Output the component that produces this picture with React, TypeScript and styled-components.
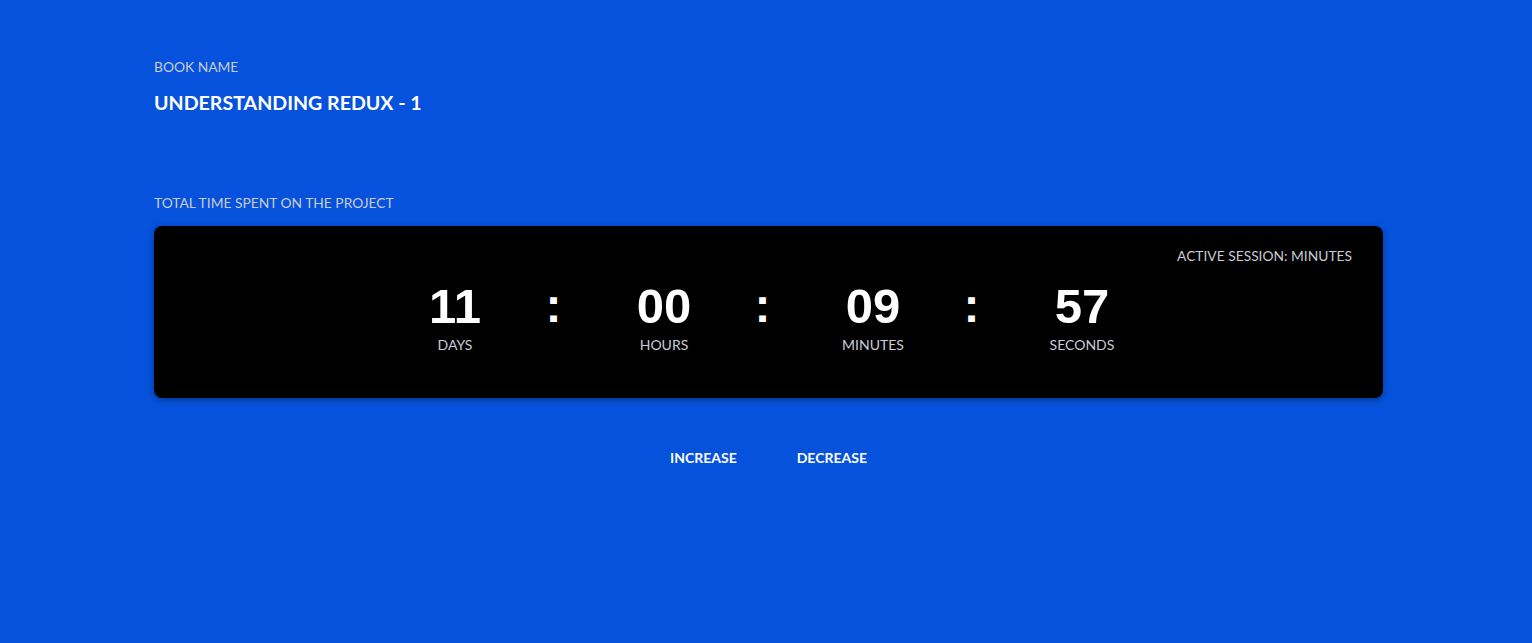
import React from "react";
import styled, { createGlobalStyle } from "styled-components";

const Global = createGlobalStyle`
  html, body { margin: 0; padding: 0; background: #0652dd; }
  body { font-family: Lato, "Open Sans", sans-serif; }
`;

const Page = styled.div`
  min-height: 643px;
  background: #0652dd;
  box-sizing: border-box;
  padding: 58px 0 0 154px;
`;

const Container = styled.div`
  width: 1229px;
`;

const Label = styled.div`
  font-size: 13.8px;
  line-height: 18px;
  color: #c9ccd4;
  text-transform: uppercase;
`;

const Title = styled.h1`
  margin: 15px 0 0;
  font-size: 19.6px;
  line-height: 24px;
  font-weight: 700;
  color: #ffffff;
`;

const Section = styled.section<{ $top: number }>`
  margin-top: ${(p) => p.$top}px;
`;

const Card = styled.div`
  margin-top: 14px;
  height: 172px;
  box-sizing: border-box;
  background: #000;
  border-radius: 8px;
  box-shadow: 0 2px 6px rgba(0, 0, 0, 0.35);
  padding: 20px 31px 0;
  display: flex;
  flex-direction: column;
`;

const Session = styled.div`
  align-self: flex-end;
  font-size: 13.8px;
  line-height: 18px;
  margin-top: 1px;
  color: #c9ccd4;
`;

const TimerRow = styled.div`
  display: flex;
  justify-content: center;
  align-items: flex-start;
  margin-top: 17px;
`;

const Unit = styled.div`
  width: 120px;
  display: flex;
  flex-direction: column;
  align-items: center;
`;

const Digits = styled.div`
  font-family: "Liberation Sans", Arial, sans-serif;
  font-weight: 700;
  font-size: 49px;
  line-height: 49px;
  color: #fff;
`;

const UnitLabel = styled.div`
  margin-top: 5px;
  font-size: 14px;
  line-height: 18px;
  color: #c9ccd4;
`;

const Colon = styled.div`
  font-family: "Liberation Sans", Arial, sans-serif;
  font-weight: 700;
  font-size: 48px;
  line-height: 48px;
  color: #fff;
  width: 17px;
  text-align: center;
  margin: 0 42px 0 30px;
`;

const Actions = styled.div`
  display: flex;
  justify-content: center;
  margin-top: 51px;
`;

const Button = styled.button`
  background: transparent;
  border: none;
  color: #fff;
  font-family: Lato, sans-serif;
  font-weight: 700;
  font-size: 14px;
  line-height: 18px;
  padding: 0 30px;
  cursor: pointer;
`;

const units = [
  { v: "11", l: "DAYS" },
  { v: "00", l: "HOURS" },
  { v: "09", l: "MINUTES" },
  { v: "57", l: "SECONDS" },
];

export default function App() {
  return (
    <>
      <Global />
      <Page>
        <Container>
          <Label>Book Name</Label>
          <Title>UNDERSTANDING REDUX - 1</Title>
          <Section $top={79}>
            <Label>Total time spent on the project</Label>
            <Card>
              <Session>ACTIVE SESSION: MINUTES</Session>
              <TimerRow>
                {units.map((u, i) => (
                  <React.Fragment key={u.l}>
                    {i > 0 && <Colon>:</Colon>}
                    <Unit>
                      <Digits>{u.v}</Digits>
                      <UnitLabel>{u.l}</UnitLabel>
                    </Unit>
                  </React.Fragment>
                ))}
              </TimerRow>
            </Card>
          </Section>
          <Actions>
            <Button>INCREASE</Button>
            <Button>DECREASE</Button>
          </Actions>
        </Container>
      </Page>
    </>
  );
}
